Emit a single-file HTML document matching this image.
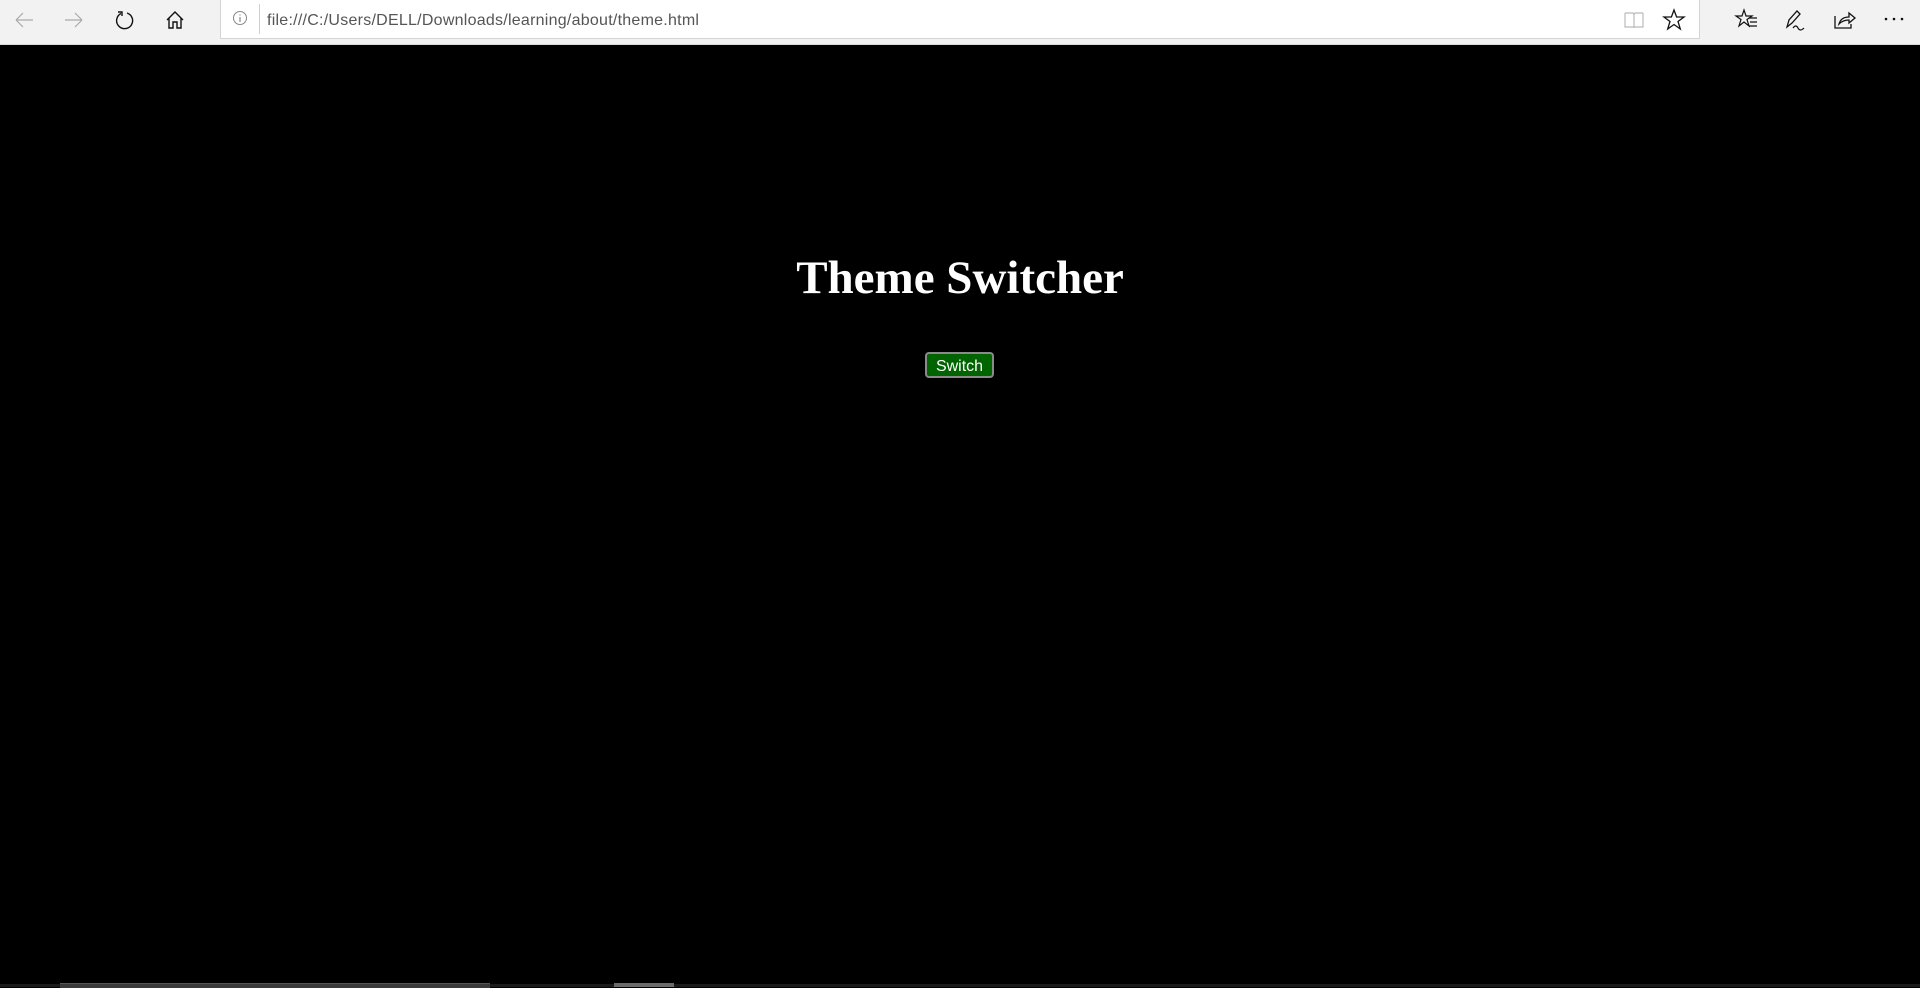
<!DOCTYPE html>
<html><head><meta charset="utf-8"><style>
html,body{margin:0;padding:0;width:1920px;height:987px;overflow:hidden;background:#000;}
#bar{position:absolute;left:0;top:0;width:1920px;height:44px;background:#f2f2f2;border-bottom:1px solid #d9d9d9;}
#addr{position:absolute;left:220px;top:0;width:1478px;height:38px;background:#fff;border:1px solid #d4d4d4;border-top:none;}
#sep{position:absolute;left:38px;top:4px;width:1px;height:30px;background:#d0d0d0;}
#url{position:absolute;left:46px;top:12px;font:16px "Liberation Sans",sans-serif;color:#555;letter-spacing:0.25px;}
svg{position:absolute;overflow:visible}
h1{position:absolute;left:0;width:1920px;top:251px;margin:0;text-align:center;font:bold 47px "Liberation Serif",serif;color:#fff;}
#btn{position:absolute;left:925px;top:352px;width:69px;height:26px;box-sizing:border-box;background:#006400;border:2px solid #8a8a8a;border-radius:4px;color:#fff;font:16px "Liberation Sans",sans-serif;text-align:center;line-height:25px;}
#sb1{position:absolute;left:60px;top:983px;width:430px;height:4px;background:#3a3a3a;border-top:1px solid #555;}
#sb2{position:absolute;left:614px;top:983px;width:60px;height:4px;background:#6a6a6a;}
#sb0{position:absolute;left:0;top:984px;width:1920px;height:3px;background:#1a1a1a;}
</style></head><body>
<div id="bar">
<svg width="20" height="20" style="left:14px;top:10px"><path d="M2 10H19M2 10L9 3M2 10L9 17" stroke="#aaa" stroke-width="1.2" fill="none"/></svg>
<svg width="20" height="20" style="left:64px;top:10px"><path d="M1 10H18M18 10L11 3M18 10L11 17" stroke="#aaa" stroke-width="1.2" fill="none"/></svg>
<svg width="20" height="20" style="left:115px;top:10px"><path d="M6 3.5A8 8 0 1 0 12 3" stroke="#111" stroke-width="1.4" fill="none"/><path d="M3 2H7V6" stroke="#111" stroke-width="1.4" fill="none"/></svg>
<svg width="20" height="20" style="left:165px;top:10px"><path d="M2 10L10 2L18 10M4 8V18H8V12H12V18H16V8" stroke="#111" stroke-width="1.4" fill="none"/></svg>
<div id="addr"><svg width="16" height="16" style="left:12px;top:11px"><circle cx="7" cy="7" r="6.5" stroke="#888" fill="none"/><path d="M7 6V11M7 3.5V4.5" stroke="#888" stroke-width="1.2"/></svg><div id="sep"></div><div id="url">file:///C:/Users/DELL/Downloads/learning/about/theme.html</div></div>
<svg width="20" height="20" style="left:1624px;top:10px"><path d="M1 3H8Q10 3 10 5V18M19 3H12Q10 3 10 5M1 3V17H10M19 3V17H10" stroke="#bbb" stroke-width="1.2" fill="none"/></svg>
<svg width="22" height="22" style="left:1663px;top:9px"><path d="M11 1L13.6 8H21L15 12.5L17.3 20L11 15.5L4.7 20L7 12.5L1 8H8.4Z" stroke="#111" stroke-width="1.3" fill="none"/></svg>
<svg width="24" height="22" style="left:1736px;top:9px"><path d="M8 1L10 7H16L11 10.5L13 17L8 13L3 17L5 10.5L0 7H6Z" stroke="#111" stroke-width="1.2" fill="none"/><path d="M13 9H21M14 13H21M13 17H21" stroke="#111" stroke-width="1.3"/></svg>
<svg width="24" height="22" style="left:1785px;top:9px"><path d="M2 18L4 11L12 2L15 5L7 14Z" stroke="#111" stroke-width="1.3" fill="none"/><path d="M8 19Q11 15 13 19T19 19" stroke="#111" stroke-width="1.2" fill="none"/></svg>
<svg width="22" height="22" style="left:1834px;top:9px"><path d="M1 7V19H17V15" stroke="#111" stroke-width="1.3" fill="none"/><path d="M5 15Q7 8 15 8V4L21 9L15 14V11Q9 11 5 15Z" stroke="#111" stroke-width="1.3" fill="none"/></svg>
<svg width="24" height="6" style="left:1884px;top:17px"><circle cx="2" cy="2" r="1.3" fill="#111"/><circle cx="10" cy="2" r="1.3" fill="#111"/><circle cx="18" cy="2" r="1.3" fill="#111"/></svg>
</div>
<h1>Theme Switcher</h1>
<div id="btn">Switch</div>
<div id="sb0"></div><div id="sb1"></div><div id="sb2"></div>
</body></html>
